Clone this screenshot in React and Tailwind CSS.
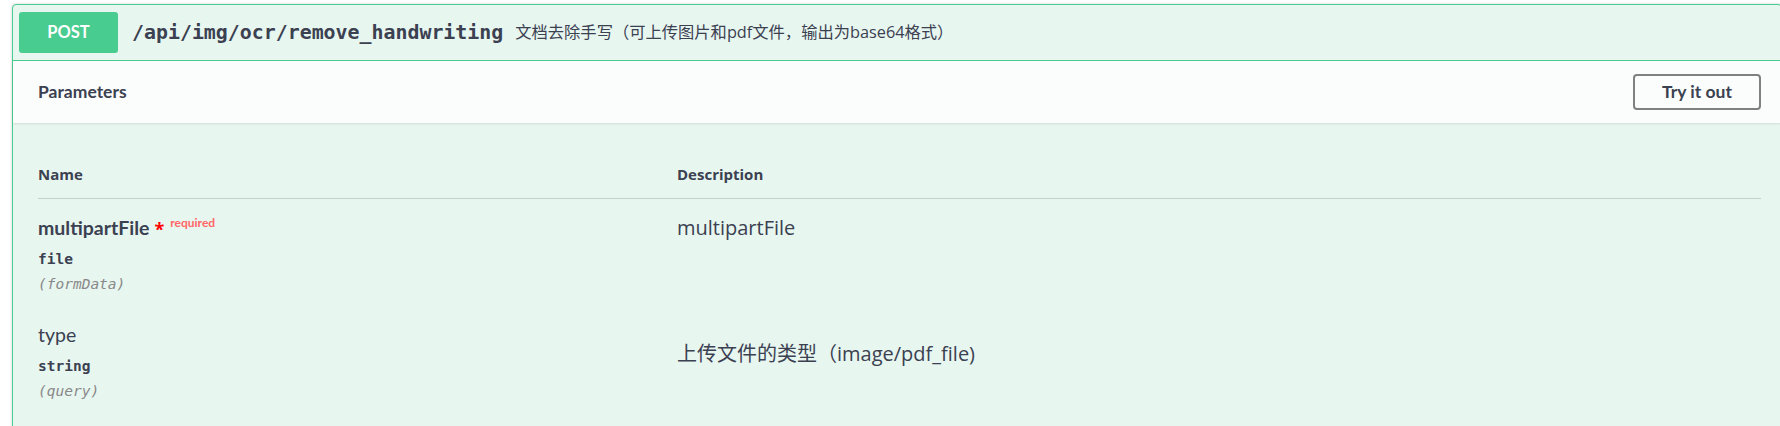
import React from "react";

const MONO = "font-['DejaVu_Sans_Mono',monospace]";
const HEAD = "font-['Lato','Noto_Sans',sans-serif]";
const BODY = "font-['Open_Sans','Noto_Sans_CJK_SC',sans-serif]";

const PARAMS = [
    { name: "multipartFile", required: true, type: "file", where: "(formData)", description: "multipartFile", descOffset: "pt-0" },
    { name: "type", required: false, type: "string", where: "(query)", description: "上传文件的类型（image/pdf_file)", descOffset: "pt-[19px]" },
];

function ParamRow({ param, first }) {
    return (
        <div className={`grid grid-cols-[639px_1fr] ${first ? "pt-[17px]" : "pt-[26px]"}`}>
            <div>
                <div className="flex items-start h-[24px]">
                    <span className={`${HEAD} text-[19.5px] leading-[24px] text-[#3b4151] ${param.required ? "font-bold" : "font-normal"}`}>
                        {param.name}
                    </span>
                    {param.required && (
                        <>
                            <span className={`${BODY} ml-[5px] mt-[3px] text-[18px] leading-[20px] font-bold text-[#ff0000]`}>*</span>
                            <span className={`${HEAD} ml-[6px] -mt-[1px] text-[12px] leading-[16px] font-bold text-[#ff6666]`}>required</span>
                        </>
                    )}
                </div>
                <div className={`${MONO} mt-[7px] text-[14.5px] leading-[25px] font-semibold text-[#3b4151]`}>{param.type}</div>
                <div className={`${MONO} text-[14.5px] leading-[25px] italic text-[#888888]`}>{param.where}</div>
            </div>
            <div className={param.descOffset}>
                <p className={`${BODY} text-[20px] leading-[24px] text-[#3b4151]`}>{param.description}</p>
            </div>
        </div>
    );
}

export default function App() {
    return (
        <div className="w-[1780px] h-[426px] overflow-hidden bg-white pl-[12px] pt-[4px]">
            <div className="mr-[-2px] h-[460px] rounded-[4px] border border-[#49cc90] bg-[#e8f6f0] shadow-[0_0_3px_rgba(0,0,0,0.19)]">
                {/* Summary */}
                <div className="flex items-center border-b border-[#49cc90] py-[7px] pl-[6px]">
                    <span className={`${HEAD} flex h-[41px] w-[99px] items-center justify-center rounded-[3px] bg-[#49cc90] text-[16.5px] font-bold text-white`}>
                        POST
                    </span>
                    <span className={`${MONO} ml-[14px] text-[19.9px] font-semibold text-[#3b4151]`}>/api/img/ocr/remove_handwriting</span>
                    <span className={`${BODY} ml-[12px] text-[16.3px] text-[#3b4151]`}>文档去除手写（可上传图片和pdf文件，输出为base64格式）</span>
                </div>

                {/* Parameters header */}
                <div className="flex h-[62px] items-center justify-between bg-white/80 pl-[25px] pr-[20px] shadow-[0_1px_2px_rgba(0,0,0,0.1)]">
                    <h4 className={`${HEAD} text-[17.5px] font-bold text-[#3b4151]`}>Parameters</h4>
                    <button className={`${HEAD} h-[36px] w-[128px] rounded-[4px] border-2 border-[#808080] bg-transparent text-[17.5px] font-bold text-[#3b4151]`}>
                        Try it out
                    </button>
                </div>

                {/* Table */}
                <div className="pl-[25px] pr-[20px]">
                    <div className={`${BODY} grid grid-cols-[639px_1fr] border-b border-[#c4d0cc] pt-[41px] pb-[14px] text-[15px] leading-[20px] font-bold text-[#3b4151]`}>
                        <div>Name</div>
                        <div>Description</div>
                    </div>
                    {PARAMS.map((p, i) => (
                        <ParamRow key={p.name} param={p} first={i === 0} />
                    ))}
                </div>
            </div>
        </div>
    );
}
